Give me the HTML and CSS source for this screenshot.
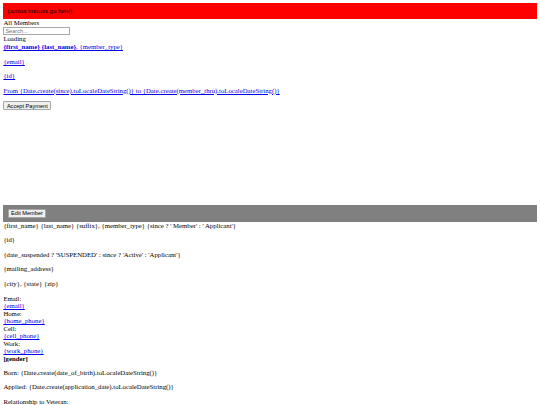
FILE: index.html
```html
<!DOCTYPE html>
<html>
<head>
<meta charset="utf-8">
<title>Members</title>
<link rel="stylesheet" href="styles.css">
</head>
<body>
<div class="actions">(action buttons go here)</div>
<div class="list-title">All Members</div>
<input class="search" type="text" placeholder="Search...">
<div class="loading">Loading</div>
<a href="#" class="member-link"><b>{first_name} {last_name}</b>, {member_type}</a>
<p><a href="#">{email}</a></p>
<p><a href="#">{id}</a></p>
<p><a href="#">From {Date.create(since).toLocaleDateString()} to {Date.create(member_thru).toLocaleDateString()}</a></p>
<button class="btn">Accept Payment</button>
<div class="spacer"></div>
<div class="toolbar"><button class="btn">Edit Member</button></div>
<div class="detail-title">{first_name} {last_name} {suffix}, {member_type} {since ? ' Member' : ' Applicant'}</div>
<p>{id}</p>
<p>{date_suspended ? 'SUSPENDED' : since ? 'Active' : 'Applicant'}</p>
<p>{mailing_address}</p>
<p>{city}, {state} {zip}</p>
<div class="contact">
  <div>Email:</div>
  <a href="#">{email}</a>
  <div>Home:</div>
  <a href="#">{home_phone}</a>
  <div>Cell:</div>
  <a href="#">{cell_phone}</a>
  <div>Work:</div>
  <a href="#">{work_phone}</a>
  <div><b>[gender]</b></div>
</div>
<p>Born: {Date.create(date_of_birth).toLocaleDateString()}</p>
<p>Applied: {Date.create(application_date).toLocaleDateString()}</p>
<p class="last">Relationship to Veteran:</p>
</body>
</html>
```
FILE: styles.css
```css
html {
  background: #fff;
}
body {
  margin: 3.375px;
  font-family: "Liberation Serif", "Times New Roman", serif;
  font-size: 6.75px;
  line-height: 7.76px;
  color: #000;
}
p {
  margin: 6.75px 0;
}
a {
  color: #0000ee;
}
.actions {
  background: #ff0000;
  padding: 3.8px 4.22px;
}
.search {
  box-sizing: border-box;
  width: 67px;
  height: 8.9px;
  padding: 0 1px;
  margin: 0;
  border: 1px solid #a9a9a9;
  font-family: "Liberation Sans", Arial, sans-serif;
  font-size: 5.625px;
  vertical-align: bottom;
}
.search::placeholder {
  color: #757575;
}
.btn {
  box-sizing: border-box;
  height: 8.9px;
  padding: 0 2.5px;
  margin: 0;
  border: 1px solid #a6a6a6;
  border-radius: 1px;
  background: #efefef;
  color: #000;
  font-family: "Liberation Sans", Arial, sans-serif;
  font-size: 5.625px;
  line-height: 6px;
  vertical-align: bottom;
}
.spacer {
  height: 94.5px;
}
.toolbar {
  background: #808080;
  padding: 4.22px;
}
.contact {
  line-height: 7.5px;
}
.contact a {
  display: block;
  width: max-content;
}
.last {
  margin-bottom: 0;
}
```
